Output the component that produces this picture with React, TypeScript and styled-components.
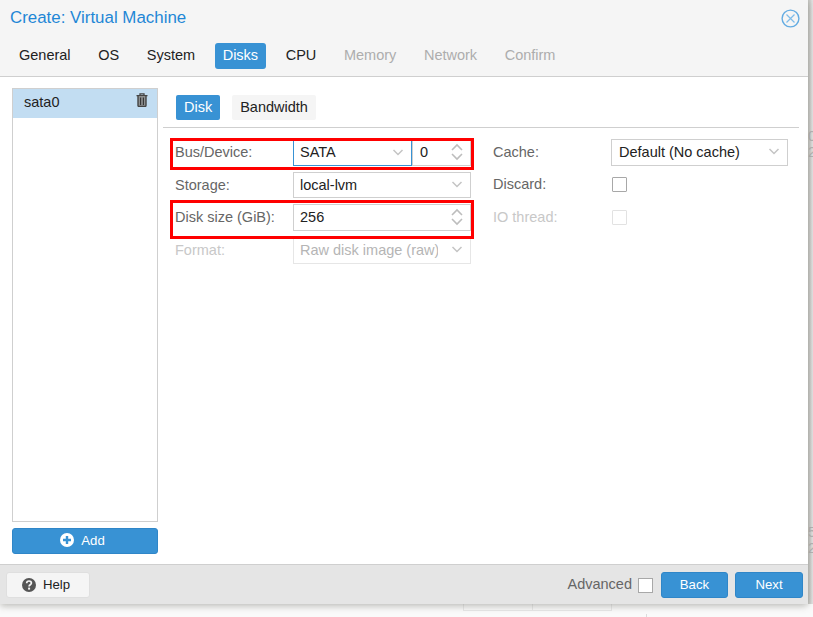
import React from "react";
import styled, { createGlobalStyle } from "styled-components";

const Global = createGlobalStyle`
  html, body { margin: 0; padding: 0; background: #fff; }
  body { width: 813px; height: 617px; overflow: hidden; font-family: "Liberation Sans", Arial, sans-serif; font-size: 14.5px; }
  * { box-sizing: border-box; }
`;

const Page = styled.div`
  position: relative;
  width: 813px;
  height: 617px;
  overflow: hidden;
  background: #fafafa;
`;
const BackdropStrip = styled.div`
  position: absolute;
  left: 808px;
  top: 0;
  width: 5px;
  height: 604px;
  overflow: hidden;
  background: linear-gradient(90deg, #c6c6c2 0, #cfcfcc 2px, #dedede 4px, #e2e2e2 100%);
`;
const GhostGlyph = styled.span<{ $top: number }>`
  position: absolute;
  left: 0;
  top: ${(p) => p.$top}px;
  font-size: 14px;
  line-height: 14px;
  color: #b4b4b4;
`;
const GhostBar = styled.div`
  position: absolute;
  left: 463px;
  top: 603px;
  width: 149px;
  height: 8px;
  border: 1px solid #e8e8e8;
  display: flex;
`;
const GhostDivider = styled.div`
  width: 69px;
  border-right: 1px solid #e8e8e8;
`;
const GhostTick = styled.div`
  position: absolute;
  left: 646px;
  top: 614px;
  width: 1px;
  height: 3px;
  background: #dcdcdc;
`;
const Win = styled.div`
  position: relative;
  width: 808px;
  height: 604px;
  display: flex;
  flex-direction: column;
  background: #fff;
  border-bottom-right-radius: 4px;
  box-shadow: 0 2px 7px rgba(90, 90, 80, 0.4);
`;
const Header = styled.div`
  height: 77px;
  background: #f5f5f5;
  border-bottom: 1px solid #cfcfcf;
  display: flex;
  flex-direction: column;
`;
const TitleRow = styled.div`
  height: 36px;
  padding-left: 10px;
  padding-right: 8px;
  display: flex;
  align-items: center;
  justify-content: space-between;
`;
const Title = styled.div`
  color: #1f87d6;
  font-size: 16.9px;
  margin-top: -1px;
`;
const TabRow = styled.div`
  display: flex;
  padding: 7px 0 0 11px;
  gap: 11.6px;
`;
const Tab = styled.div<{ $active?: boolean; $off?: boolean }>`
  height: 26px;
  line-height: 25px;
  padding: 0 8px;
  border-radius: 3px;
  background: ${(p) => (p.$active ? "#3892d4" : "transparent")};
  color: ${(p) => (p.$active ? "#fff" : p.$off ? "#adadad" : "#222")};
`;
const Body = styled.div`
  flex: 1;
  display: flex;
  min-height: 0;
`;
const Side = styled.div`
  width: 163px;
  padding: 11px 5px 10px 12px;
  display: flex;
  flex-direction: column;
  gap: 6px;
`;
const List = styled.div`
  flex: 1;
  border: 1px solid #cfcfcf;
`;
const ListRow = styled.div`
  height: 29px;
  background: #c2ddf2;
  padding: 0 9px 3px 11px;
  display: flex;
  align-items: center;
  justify-content: space-between;
  color: #222;
`;
const TrashIcon = styled.svg`
  width: 12px;
  height: 14px;
  margin-bottom: 4px;
`;
const AddBtn = styled.div`
  height: 26px;
  background: #3892d4;
  border: 1px solid #2f86c8;
  border-radius: 3px;
  color: #fff;
  font-size: 13.2px;
  padding: 0 5px 2px 0;
  display: flex;
  align-items: center;
  justify-content: center;
  gap: 7px;
`;
const Main = styled.div`
  flex: 1;
  position: relative;
  padding: 18px 9px 0 0;
`;
const SubTabs = styled.div`
  display: flex;
  gap: 12px;
  padding: 0 0 7px 13px;
  border-bottom: 1px solid #cfcfcf;
`;
const SubTab = styled.div<{ $active?: boolean }>`
  height: 25px;
  line-height: 25px;
  padding: 0 8px;
  border-radius: 2px;
  background: ${(p) => (p.$active ? "#3892d4" : "#f5f5f5")};
  color: ${(p) => (p.$active ? "#fff" : "#222")};
`;
const Form = styled.div`
  display: grid;
  grid-template-columns: 318px 295px;
  padding: 11px 0 0 12px;
`;
const Col = styled.div<{ $rows: string }>`
  display: grid;
  grid-template-rows: ${(p) => p.$rows};
  row-gap: 6px;
`;
const Row = styled.div`
  display: flex;
  align-items: center;
  min-height: 0;
`;
const Label = styled.div<{ $off?: boolean }>`
  width: 118px;
  flex: none;
  color: ${(p) => (p.$off ? "#c8c8c8" : "#666")};
  margin-top: -1px;
`;
const Field = styled.div<{ $w: number; $focus?: boolean; $off?: boolean; $pad?: number }>`
  width: ${(p) => p.$w}px;
  height: 100%;
  flex: none;
  background: #fff;
  border: 1px solid ${(p) => (p.$focus ? "#3892d4" : p.$off ? "#e6e6e6" : "#cfcfcf")};
  padding: 0 7px 1px ${(p) => p.$pad ?? 6}px;
  display: flex;
  align-items: center;
  justify-content: space-between;
  color: ${(p) => (p.$off ? "#b5b5b5" : "#222")};
  white-space: nowrap;
`;
const Clipped = styled.span`
  width: 138px;
  overflow: hidden;
`;
const Check = styled.div<{ $off?: boolean }>`
  width: 15px;
  height: 15px;
  margin-left: 1px;
  background: #fff;
  border: 1.5px solid ${(p) => (p.$off ? "#e2e2e2" : "#a8a8a8")};
  border-radius: 1px;
`;
const Marker = styled.div<{ $top: number; $h: number }>`
  position: absolute;
  left: 7px;
  top: ${(p) => p.$top}px;
  width: 304px;
  height: ${(p) => p.$h}px;
  border: 3px solid #f00;
  pointer-events: none;
`;
const Footer = styled.div`
  height: 40px;
  background: #e5e5e5;
  border-top: 1px solid #cfcfcf;
  padding: 0 5px 0 6px;
  display: flex;
  align-items: center;
  justify-content: space-between;
`;
const HelpBtn = styled.div`
  width: 84px;
  height: 26px;
  background: #f5f5f5;
  border: 1px solid #dfdfdf;
  border-radius: 3px;
  font-size: 13.2px;
  color: #222;
  padding-right: 4px;
  display: flex;
  align-items: center;
  justify-content: center;
  gap: 7px;
`;
const FooterRight = styled.div`
  display: flex;
  align-items: center;
`;
const AdvLabel = styled.div`
  color: #666;
  margin: 0 6px 2px 0;
`;
const AdvCheck = styled.div`
  width: 15px;
  height: 15px;
  background: #fff;
  border: 1.5px solid #a8a8a8;
  margin-right: 8px;
  margin-top: 1px;
`;
const NavBtn = styled.div<{ $w: number }>`
  width: ${(p) => p.$w}px;
  height: 26px;
  margin-left: ${(p) => (p.$w > 67 ? 7 : 0)}px;
  background: #3892d4;
  border: 1px solid #2f86c8;
  border-radius: 3px;
  color: #fff;
  font-size: 13.2px;
  display: flex;
  align-items: center;
  justify-content: center;
`;

const Chevron = () => (
  <svg width="12" height="7" viewBox="0 0 12 7" fill="none" stroke="#c4c4c4" strokeWidth="1.5">
    <path d="M1.5 1l4.5 4.5L10.5 1" />
  </svg>
);
const Spinner = () => (
  <svg width="12" height="18" viewBox="0 0 12 18" fill="none" stroke="#bdbdbd" strokeWidth="1.6">
    <path d="M1 7l5-5 5 5M1 11l5 5 5-5" />
  </svg>
);
const CloseIcon = () => (
  <svg width="19" height="19" viewBox="0 0 19 19" fill="none">
    <circle cx="9.5" cy="9.5" r="8.4" stroke="#64ace2" strokeWidth="1.4" />
    <path d="M5.5 5.5l8 8M13.5 5.5l-8 8" stroke="#7fbce9" strokeWidth="1.2" />
  </svg>
);

export default function App() {
  const tabs = ["General", "OS", "System", "Disks", "CPU", "Memory", "Network", "Confirm"];
  return (
    <Page>
      <Global />
      <BackdropStrip>
        <GhostGlyph $top={129}>0</GhostGlyph>
        <GhostGlyph $top={145}>2</GhostGlyph>
        <GhostGlyph $top={525}>5</GhostGlyph>
        <GhostGlyph $top={541}>2</GhostGlyph>
      </BackdropStrip>
      <GhostBar>
        <GhostDivider />
      </GhostBar>
      <GhostTick />
      <Win>
        <Header>
          <TitleRow>
            <Title>Create: Virtual Machine</Title>
            <CloseIcon />
          </TitleRow>
          <TabRow>
            {tabs.map((t, i) => (
              <Tab key={t} $active={t === "Disks"} $off={i > 4}>
                {t}
              </Tab>
            ))}
          </TabRow>
        </Header>
        <Body>
          <Side>
            <List>
              <ListRow>
                <span>sata0</span>
                <TrashIcon viewBox="0 0 12 14">
                  <path d="M4 2V.9h4V2M.5 2.6h11" fill="none" stroke="#444" strokeWidth="1.3" />
                  <path d="M2 3v9.4c0 .6.4 1 1 1h6c.6 0 1-.4 1-1V3" fill="#8d8f90" stroke="#444" strokeWidth="1.4" />
                  <path d="M4.6 4.5v7.5M7.4 4.5v7.5" fill="none" stroke="#333" strokeWidth="1.1" />
                </TrashIcon>
              </ListRow>
            </List>
            <AddBtn>
              <svg width="14" height="14" viewBox="0 0 14 14">
                <circle cx="7" cy="7" r="7" fill="#fff" />
                <path d="M3 7h8M7 3v8" stroke="#3892d4" strokeWidth="2.4" />
              </svg>
              Add
            </AddBtn>
          </Side>
          <Main>
            <SubTabs>
              <SubTab $active>Disk</SubTab>
              <SubTab>Bandwidth</SubTab>
            </SubTabs>
            <Form>
              <Col $rows="27px 26.33px 26.67px 26.67px">
                <Row>
                  <Label>Bus/Device:</Label>
                  <Field $w={119} $focus>SATA<Chevron /></Field>
                  <Field $w={59} $pad={7}>0<Spinner /></Field>
                </Row>
                <Row>
                  <Label>Storage:</Label>
                  <Field $w={178}>local-lvm<Chevron /></Field>
                </Row>
                <Row>
                  <Label>Disk size (GiB):</Label>
                  <Field $w={178}>256<Spinner /></Field>
                </Row>
                <Row>
                  <Label $off>Format:</Label>
                  <Field $w={178} $off><Clipped>Raw disk image (raw)</Clipped><Chevron /></Field>
                </Row>
              </Col>
              <Col $rows="26.67px 26.67px 26.67px">
                <Row>
                  <Label>Cache:</Label>
                  <Field $w={177} $pad={7}>Default (No cache)<Chevron /></Field>
                </Row>
                <Row>
                  <Label>Discard:</Label>
                  <Check />
                </Row>
                <Row>
                  <Label $off>IO thread:</Label>
                  <Check $off />
                </Row>
              </Col>
            </Form>
            <Marker $top={61} $h={32} />
            <Marker $top={123} $h={39} />
          </Main>
        </Body>
        <Footer>
          <HelpBtn>
            <svg width="14" height="14" viewBox="0 0 14 14">
              <circle cx="7" cy="7" r="7" fill="#555" />
              <path d="M4.7 5.3c0-3 4.7-3 4.7-.2 0 1.7-2.3 1.6-2.3 3.3" fill="none" stroke="#f5f5f5" strokeWidth="1.7" />
              <rect x="6.1" y="9.6" width="2" height="2" fill="#f5f5f5" />
            </svg>
            Help
          </HelpBtn>
          <FooterRight>
            <AdvLabel>Advanced</AdvLabel>
            <AdvCheck />
            <NavBtn $w={67}>Back</NavBtn>
            <NavBtn $w={68}>Next</NavBtn>
          </FooterRight>
        </Footer>
      </Win>
    </Page>
  );
}
